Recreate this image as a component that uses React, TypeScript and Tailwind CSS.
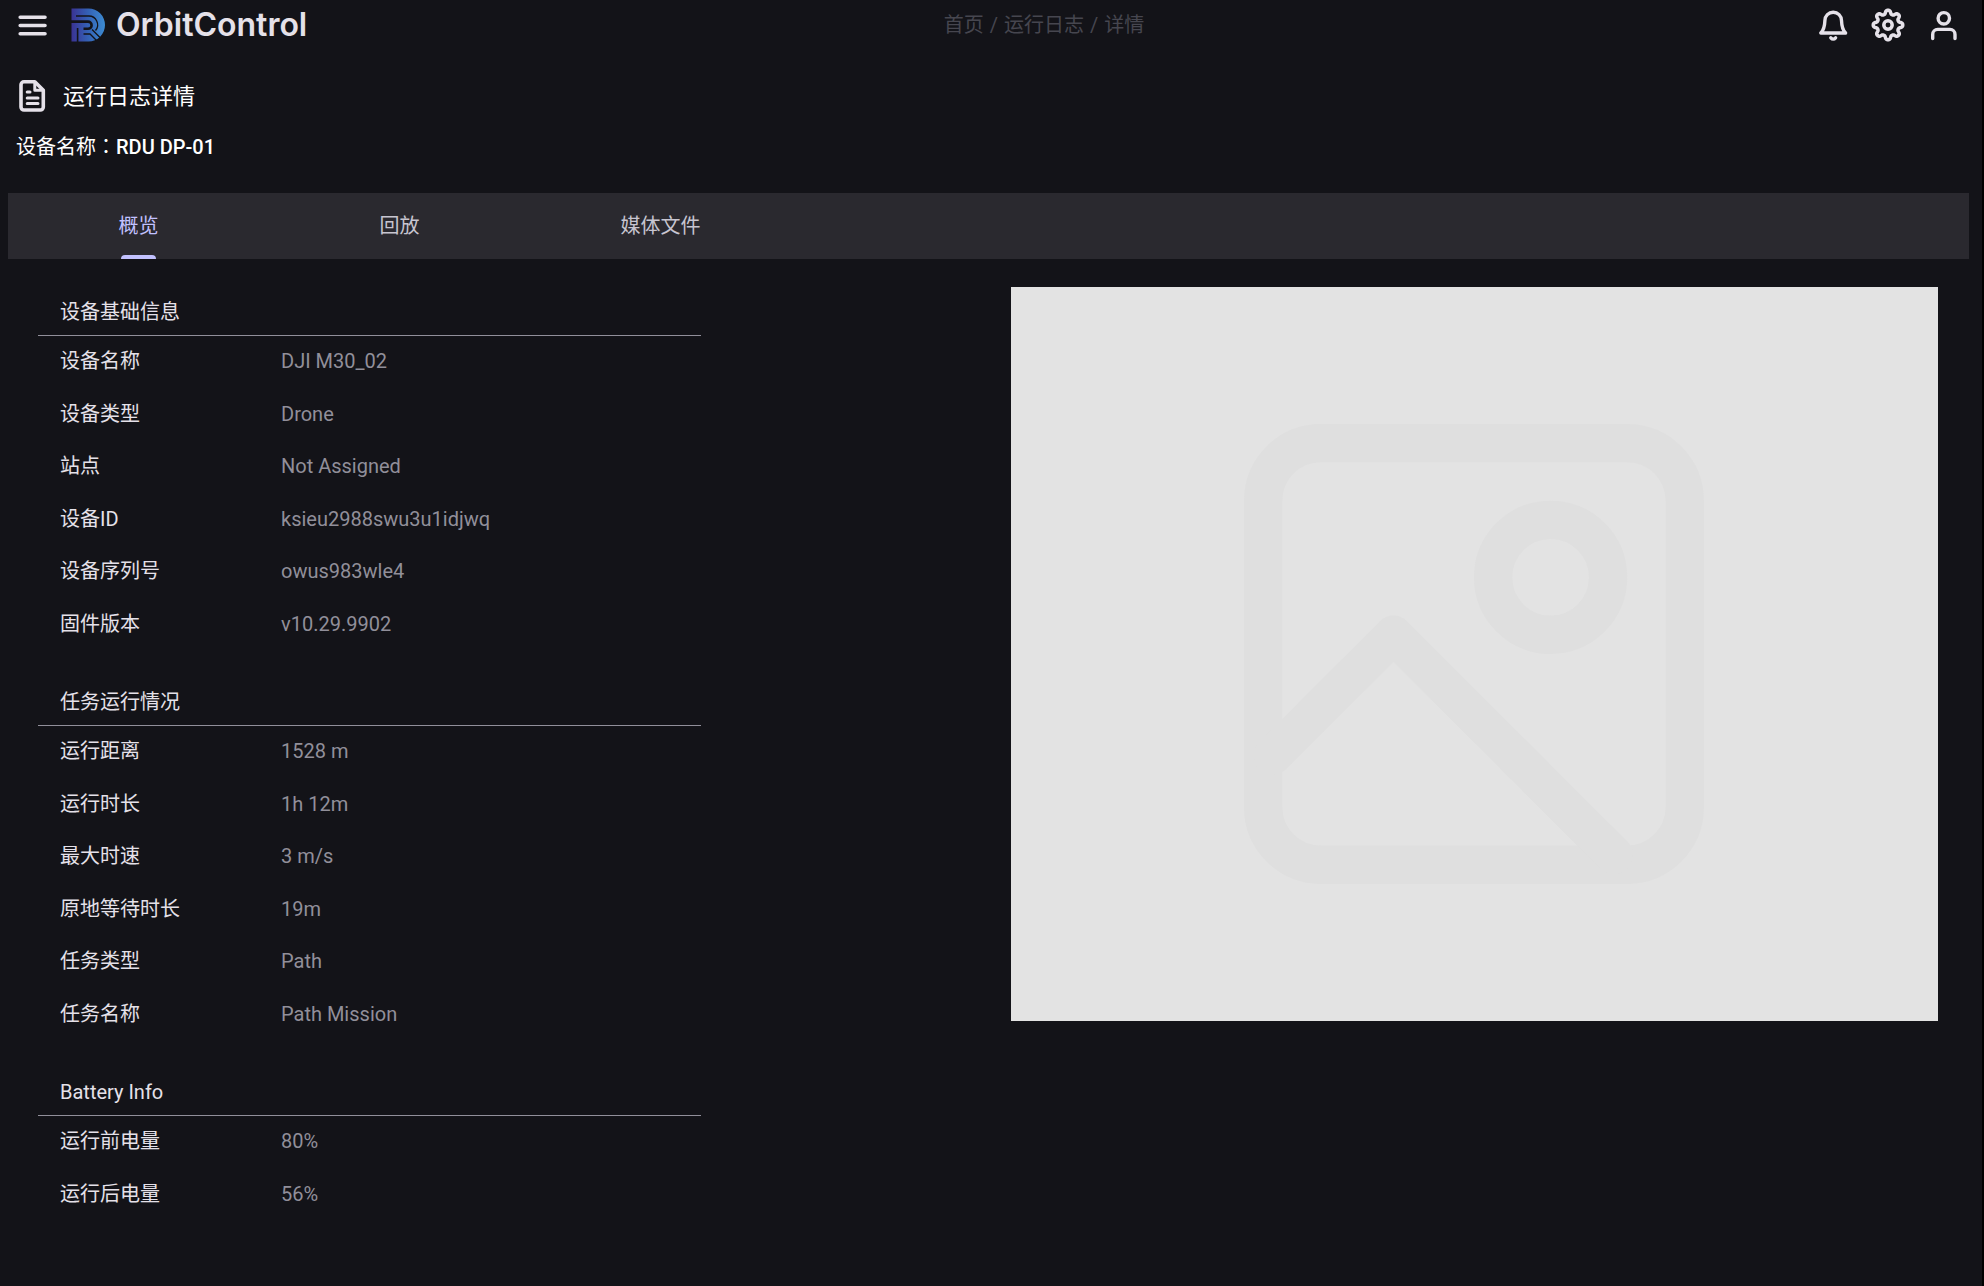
const deviceRows: [string, string][] = [
  ["设备名称", "DJI M30_02"],
  ["设备类型", "Drone"],
  ["站点", "Not Assigned"],
  ["设备ID", "ksieu2988swu3u1idjwq"],
  ["设备序列号", "owus983wle4"],
  ["固件版本", "v10.29.9902"],
];

const missionRows: [string, string][] = [
  ["运行距离", "1528 m"],
  ["运行时长", "1h 12m"],
  ["最大时速", "3 m/s"],
  ["原地等待时长", "19m"],
  ["任务类型", "Path"],
  ["任务名称", "Path Mission"],
];

const batteryRows: [string, string][] = [
  ["运行前电量", "80%"],
  ["运行后电量", "56%"],
];

const stroke = {
  fill: "none",
  stroke: "currentColor",
  strokeLinecap: "round" as const,
  strokeLinejoin: "round" as const,
};

function MenuIcon() {
  return (
    <svg className="h-[34px] w-[34px]" viewBox="-1 -1 34 34" {...stroke} strokeWidth="3.600">
      <path d="M4.200 8.200H29M4.200 16.500H29M4.200 24.800H29" />
    </svg>
  );
}

function Logo() {
  return (
    <svg className="h-[34px] w-[34px]" viewBox="0 0 34 34" fill="none" aria-hidden="true">
      <defs>
        <linearGradient id="brand" x1="0" y1="0" x2="34" y2="0" gradientUnits="userSpaceOnUse">
          <stop offset="0" stopColor="#3a3192" />
          <stop offset="0.5" stopColor="#3461b5" />
          <stop offset="1" stopColor="#3c8bd2" />
        </linearGradient>
      </defs>
      <path fill="url(#brand)" d="M0.500 0.500H17.500A16.500 16.500 0 0 1 17.500 33.500H0.500Z" />
      <g stroke="#131318">
        <path strokeWidth="1.300" d="M5 8H17.500A8.800 8.800 0 0 1 24.500 22.500" />
        <path strokeWidth="2.600" d="M0 13.600H17A3.600 3.600 0 0 1 17 20.800H12.500" />
        <path strokeWidth="1.600" d="M6.600 20V34" />
        <path strokeWidth="1.300" d="M12.500 26H19L26 33M21 21.500L30.500 31" />
      </g>
    </svg>
  );
}

function BellIcon() {
  return (
    <svg className="h-[34px] w-[34px]" viewBox="-2 -1 34 34" {...stroke} strokeWidth="3.400">
      <path d="M3.800 24C6.800 21 7.700 18 7.900 11.500A8.300 8.300 0 0 1 24.500 11.500C24.700 18 25.600 21 28.600 24Z" />
      <path d="M13.800 28.800Q16.200 31.400 18.600 28.800" />
    </svg>
  );
}

function GearIcon() {
  const points: string[] = [];
  for (let i = 0; i <= 160; i++) {
    const a = (i / 160) * Math.PI * 2;
    const r = 12.9 + 2 * Math.tanh(1.6 * Math.cos(8 * a));
    points.push(`${(17 + r * Math.cos(a)).toFixed(2)} ${(17 + r * Math.sin(a)).toFixed(2)}`);
  }
  return (
    <svg className="h-[34px] w-[34px]" viewBox="0 0 34 34" {...stroke} strokeWidth="3.500">
      <path d={`M${points.join("L")}Z`} />
      <circle cx="17" cy="17" r="4.200" />
    </svg>
  );
}

function UserIcon() {
  return (
    <svg className="h-[34px] w-[34px]" viewBox="-1 -1 34 34" {...stroke} strokeWidth="3.400">
      <circle cx="15.800" cy="9.300" r="5.700" />
      <path d="M4.700 29.600V25.400A5 5 0 0 1 9.700 20.400H22A5 5 0 0 1 27 25.400V29.600" />
    </svg>
  );
}

function DocumentIcon() {
  return (
    <svg className="h-8 w-8" viewBox="0 0 32 32" {...stroke} strokeWidth="3.600">
      <path d="M8 1.800H18.800L27.300 10.300V27A3 3 0 0 1 24.300 30H8A3 3 0 0 1 5 27V4.800A3 3 0 0 1 8 1.800Z" />
      <path strokeWidth="3" d="M18.800 2.500V10.200H26.500M11.200 12H14M11.200 18H22M11.200 23.600H22" />
    </svg>
  );
}

function PictureIcon() {
  return (
    <svg
      className="w-[49.6%] text-[#dfdfdf]"
      viewBox="0 0 24 24"
      {...stroke}
      strokeWidth="2"
      role="img"
      aria-label="暂无图片"
    >
      <rect x="1" y="1" width="22" height="22" rx="3" />
      <circle cx="16" cy="8" r="3" />
      <path d="M1.500 17.300L7.800 11L19.300 22.500" />
    </svg>
  );
}

function Section({ title, rows, size }: { title: string; rows: [string, string][]; size: string }) {
  return (
    <section>
      <h2 className="border-b border-[#918f9a] px-[22px] pt-3 pb-[10px] leading-[26px]">{title}</h2>
      <dl className={`grid auto-rows-fr ${size}`}>
        {rows.map(([label, value]) => (
          <div key={label} className="flex items-center px-[22px] pb-0.5">
            <dt className="w-[221px]">{label}</dt>
            <dd className="text-[#918f9a]">{value}</dd>
          </div>
        ))}
      </dl>
    </section>
  );
}

export default function App() {
  const tabs = ["概览", "回放", "媒体文件"];
  return (
    <div className="min-h-screen border-r-2 border-black bg-[#131318] pb-12 font-[Roboto,'Noto_Sans_CJK_SC',sans-serif] text-[20px] leading-7 text-[#e5e1e9]">
      <header className="grid h-[50px] grid-cols-[1fr_auto_1fr] items-center pr-[21px] pl-[15px]">
        <div className="flex items-center">
          <button type="button" aria-label="菜单">
            <MenuIcon />
          </button>
          <a href="#home" className="ml-[22px] flex items-center gap-[11px]">
            <Logo />
            <span className="font-[Inter,sans-serif] text-[32px] leading-10 font-semibold">OrbitControl</span>
          </a>
        </div>
        <nav aria-label="面包屑" className="ml-28 flex gap-1.5 text-[#46464f]">
          <a href="#home">首页</a>
          <span>/</span>
          <a href="#logs">运行日志</a>
          <span>/</span>
          <span>详情</span>
        </nav>
        <div className="flex items-center justify-end gap-[22px]">
          <button type="button" aria-label="通知">
            <BellIcon />
          </button>
          <button type="button" aria-label="设置">
            <GearIcon />
          </button>
          <button type="button" aria-label="用户">
            <UserIcon />
          </button>
        </div>
      </header>

      <div className="mt-[30px] flex h-8 items-center gap-[15px] pl-4 text-white">
        <span className="text-[#e5e1e9]">
          <DocumentIcon />
        </span>
        <h1 className="pt-0.5 text-[22px]">运行日志详情</h1>
      </div>
      <p className="mt-5 pl-4 text-white">
        设备名称<span className="font-['Noto_Sans_CJK_TC',sans-serif]">：</span>
        <span className="font-medium">RDU DP-01</span>
      </p>

      <div role="tablist" className="mt-8 mr-[13px] ml-2 flex h-[66px] bg-[#2a292f]">
        {tabs.map((tab, i) => (
          <button
            key={tab}
            type="button"
            role="tab"
            aria-selected={i === 0}
            className="flex w-[261px] flex-col items-center justify-between text-[#c7c5d0] aria-selected:text-[#c2c1ff]"
          >
            <span className="pt-[19px]">{tab}</span>
            {i === 0 && <span className="h-1 w-[35px] rounded-t bg-[#c2c1ff]" />}
          </button>
        ))}
      </div>

      <main className="mt-7 mr-[44px] ml-[38px] flex items-start justify-between">
        <div className="flex w-[663px] flex-col gap-[26px]">
          <Section title="设备基础信息" rows={deviceRows} size="min-h-[315px]" />
          <Section title="任务运行情况" rows={missionRows} size="min-h-[315px]" />
          <Section title="Battery Info" rows={batteryRows} size="min-h-[105px]" />
        </div>
        <div className="flex aspect-[927/734] w-[48.8%] items-center justify-center bg-[#e3e3e3]">
          <PictureIcon />
        </div>
      </main>
    </div>
  );
}
